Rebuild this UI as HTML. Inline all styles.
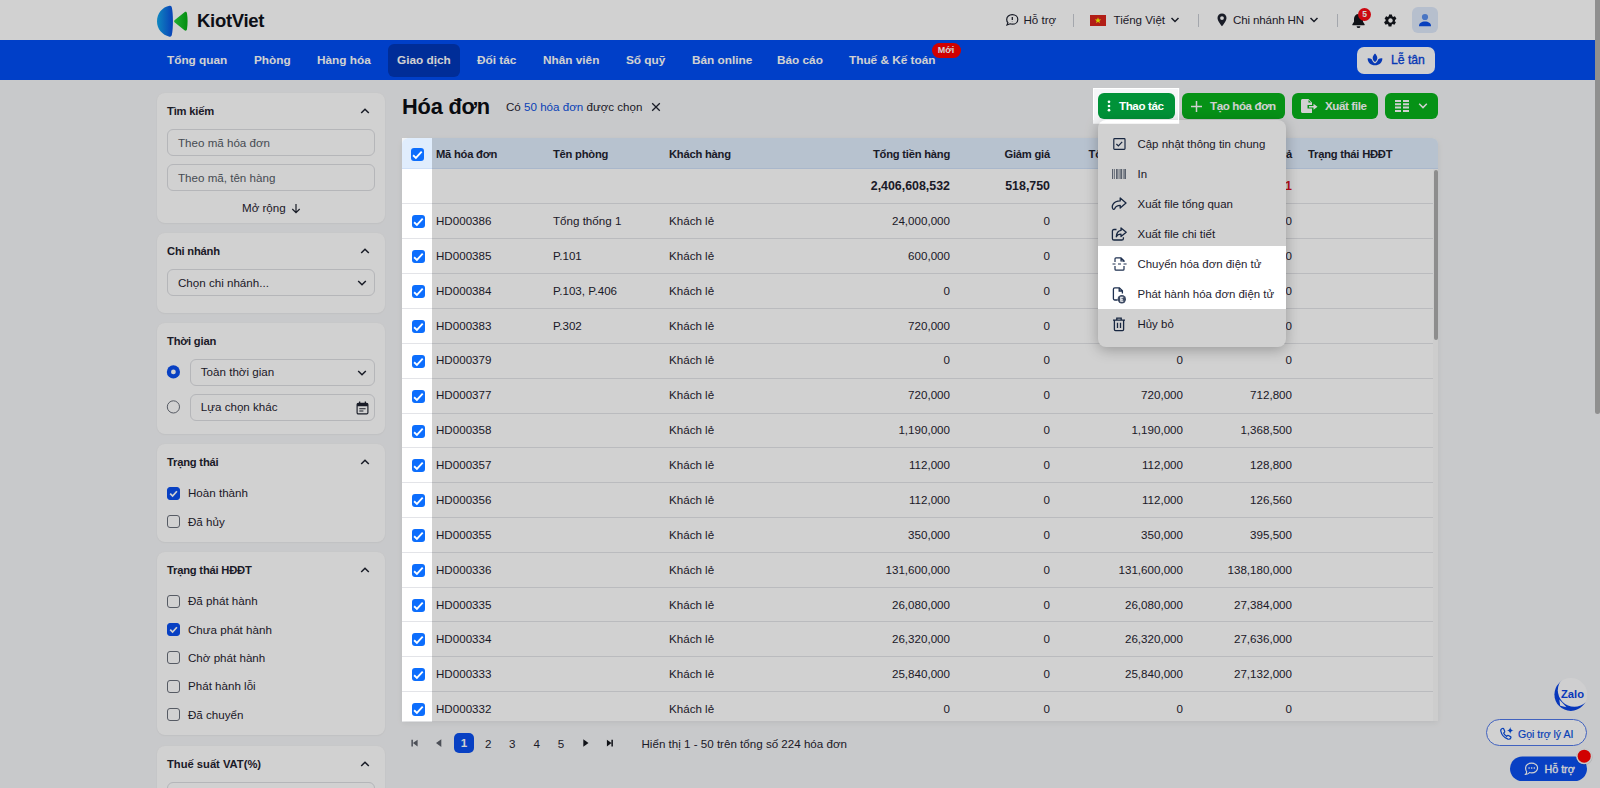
<!DOCTYPE html>
<html lang="vi">
<head>
<meta charset="utf-8">
<title>Hóa đơn - KiotViet</title>
<style>
*{box-sizing:border-box;margin:0;padding:0}
html,body{width:1600px;height:788px;overflow:hidden}
body{font-family:"Liberation Sans",sans-serif;font-size:11.6px;color:#1f2330;background:#f5f6f8;position:relative}
.abs{position:absolute}
svg{display:block}
/* header */
#hdr{position:absolute;left:0;top:0;width:1600px;height:40px;background:#fff}
#nav{position:absolute;left:0;top:40px;width:1600px;height:40px;background:#004ef5}
#nav .it{position:absolute;top:0;height:40px;line-height:40px;color:#fff;font-weight:bold;font-size:11.8px;white-space:nowrap}
#nav .act{position:absolute;left:387.5px;top:3.5px;width:72.5px;height:33px;border-radius:6px;background:#0037ba}
.hi{position:absolute;white-space:nowrap;font-size:11.6px;color:#1f2330;line-height:14px;top:13px}
.vd{position:absolute;top:14px;width:1px;height:13px;background:#c9ccd3}
/* sidebar */
.card{position:absolute;left:157px;width:228px;background:#fff;border-radius:8px;box-shadow:0 0 2px rgba(0,0,0,.04),0 1px 2px rgba(0,0,0,.04)}
.card .tt{position:absolute;left:10px;top:10px;font-weight:bold;font-size:11.2px;letter-spacing:-.2px;line-height:16px;white-space:nowrap}
.card .chev{position:absolute;left:203px;top:14px}
.inp{position:absolute;left:10px;width:208px;height:27px;border:1px solid #dddee2;border-radius:6px;background:#fff;line-height:26.4px;padding-left:10px;font-size:11.6px;color:#555b66;white-space:nowrap}
.inp.dk{color:#1f2330;line-height:24.4px}
.cb{position:absolute;left:10px;width:13px;height:13px;border:1px solid #6a6f7a;border-radius:3px;background:#fff}
.cb.on{background:#0a4fee;border-color:#0a4fee}
.cb svg,.tcb svg{position:absolute;left:0;top:0}
.cb.on svg{left:-1px;top:-1px}
.cbl{position:absolute;left:31px;font-size:11.6px;line-height:14px;white-space:nowrap}
/* main */
#ttl{position:absolute;left:402px;top:93px;font-size:21.8px;font-weight:bold;line-height:28px;color:#0c0e14;white-space:nowrap;letter-spacing:-.2px}
.btn{position:absolute;top:93px;height:26px;border-radius:6px;background:#08b21c;color:#fff;font-weight:bold;font-size:11.6px;letter-spacing:-.4px;line-height:26px;white-space:nowrap}
.btn span{position:absolute;top:0}
.btn svg{position:absolute}
/* table */
#tbl{position:absolute;left:402px;top:138px;width:1036px;height:583px;box-shadow:0 2px 6px rgba(0,0,0,.07);background:#fff;border-radius:6px 6px 0 0;overflow:hidden}
#th{position:absolute;left:0;top:0;width:1036px;height:31px;background:#e0edfd;border-bottom:1px solid #cfe0f8}
.r{position:absolute;left:0;width:1031px;border-bottom:1px solid #e3e4e8}
.c{position:absolute;top:0;height:34px;line-height:34px;white-space:nowrap;font-size:11.6px}
#th .c{top:.5px;height:31px;line-height:31px;font-weight:bold;font-size:11.2px;letter-spacing:-.22px}
.ra{text-align:right}
.r.up .c{top:-1px}
.b{font-weight:bold;font-size:12.4px}
.tcb{position:absolute;left:10px;top:11px;width:13px;height:13px;border-radius:3px;background:#0d6efd}
/* pagination */
.pg{position:absolute;top:736.5px;height:14px;line-height:14px;font-size:11.6px;color:#1f2330;white-space:nowrap}
/* menu */
#menu{position:absolute;left:1098px;top:120px;width:188px;height:226.5px;background:#fff;border-radius:8px;box-shadow:0 3px 14px rgba(0,0,0,.27)}
#menu .mi{position:absolute;left:0;width:188px;height:30px}
#menu .mi span{position:absolute;left:39.5px;top:.5px;line-height:30px;font-size:11.45px;white-space:nowrap;color:#1f2330}
#menu .mi svg{position:absolute;left:14px;top:8px}
#dim{position:absolute;left:0;top:0;z-index:50;pointer-events:none}
#sb{position:absolute;left:1595px;top:0;width:5px;height:414px;background:#8f8f8f;border-radius:0 0 3px 3px;z-index:60}
</style>
</head>
<body>
<div id="hdr">
  <svg class="abs" style="left:150px;top:0" width="44" height="40" viewBox="150 0 44 40">
    <defs>
      <linearGradient id="lgb" x1="0" y1="0" x2="1" y2="0"><stop offset="0" stop-color="#12a6ea"/><stop offset="1" stop-color="#0b4fe0"/></linearGradient>
      <linearGradient id="lgg" x1="0" y1="0" x2="1" y2="0"><stop offset="0" stop-color="#2ad440"/><stop offset="1" stop-color="#04ad12"/></linearGradient>
    </defs>
    <path fill="url(#lgb)" d="M169.600 5.800C171 5.500 171.600 6.300 171.900 7.800 173.200 13 173.400 29 171.900 34.600 171.600 36.200 171 37 169.500 36.700 162.300 35 157 29 157 21.500 157 13.500 162.300 7 169.600 5.800Z"/>
    <path fill="url(#lgg)" d="M174.800 20L184.500 12.200C185.800 11.300 186.800 12 187 13.500 187.800 18.500 187.800 24 187 29 186.800 30.500 185.800 31.200 184.500 30.300L174.800 22.600C173.900 21.900 173.900 20.700 174.800 20Z"/>
  </svg>
  <div class="abs" style="left:197px;top:10.300px;font-size:18.500px;line-height:22px;font-weight:bold;color:#10131c;letter-spacing:-.3px">KiotViet</div>

  <svg class="abs" style="left:1005px;top:13px" width="14" height="14" viewBox="0 0 14 14" fill="none" stroke="#1f2330" stroke-width="1.200"><path d="M7.300 1.600c3.100 0 5.500 2.100 5.500 4.800s-2.400 4.800-5.500 4.800c-.8 0-1.500-.1-2.200-.4L2 12l.9-2.400C2.100 8.800 1.700 7.700 1.700 6.400c0-2.700 2.500-4.800 5.600-4.800z"/><path d="M7.300 4v3.100M7.300 8.600v.2" stroke-width="1.300"/></svg>
  <div class="hi" style="left:1023.5px">Hỗ trợ</div>
  <div class="vd" style="left:1073px"></div>
  <svg class="abs" style="left:1090px;top:14.500px" width="16" height="11" viewBox="0 0 16 11"><rect width="16" height="11" fill="#da251d"/><path fill="#ff0" d="M8 2.200l.8 2.300h2.400L9.300 5.900l.7 2.300L8 6.800 6 8.200l.7-2.300L4.800 4.500h2.400z"/></svg>
  <div class="hi" style="left:1113.500px">Tiếng Việt</div>
  <svg class="abs" style="left:1170px;top:16px" width="10" height="8" viewBox="0 0 10 8" fill="none" stroke="#1f2330" stroke-width="1.500"><path d="M1.500 2l3.500 3.500L8.500 2"/></svg>
  <div class="vd" style="left:1198px"></div>
  <svg class="abs" style="left:1217px;top:13px" width="10" height="14" viewBox="0 0 10 14"><path fill="#1f2330" fill-rule="evenodd" d="M5 .5C2.400.5.500 2.500.500 5c0 3.200 4.500 8.300 4.500 8.300S9.500 8.200 9.500 5C9.500 2.500 7.600.5 5 .5zm0 2.700a1.900 1.900 0 110 3.800 1.900 1.900 0 010-3.800z"/></svg>
  <div class="hi" style="left:1233px;letter-spacing:-.15px">Chi nhánh HN</div>
  <svg class="abs" style="left:1308.500px;top:16px" width="10" height="8" viewBox="0 0 10 8" fill="none" stroke="#1f2330" stroke-width="1.500"><path d="M1.500 2l3.500 3.500L8.500 2"/></svg>
  <div class="vd" style="left:1337px"></div>
  <svg class="abs" style="left:1351px;top:13px" width="15" height="16" viewBox="0 0 15 16"><path fill="#14161d" d="M7.500 1C4.800 1 3 3.100 3 5.800v3L1.400 11.200c-.3.500 0 1.100.6 1.100h11c.6 0 .9-.6.600-1.100L12 8.800v-3C12 3.100 10.200 1 7.500 1zM5.600 13.200a1.900 1.900 0 003.800 0z"/></svg>
  <div class="abs" style="left:1358px;top:8px;width:13px;height:13px;border-radius:7px;background:#fa0a14;color:#fff;font-size:8.500px;font-weight:bold;line-height:13px;text-align:center">5</div>
  <svg class="abs" style="left:1382.500px;top:12.500px" width="15" height="15" viewBox="0 0 24 24"><path fill="#14161d" d="M19.140 12.940c.040-.3.060-.610.060-.940 0-.320-.020-.640-.070-.940l2.030-1.580a.490.490 0 00.120-.610l-1.920-3.320a.488.488 0 00-.590-.220l-2.390.960c-.5-.380-1.030-.7-1.620-.940l-.360-2.540a.484.484 0 00-.480-.410h-3.840c-.240 0-.430.170-.470.410l-.360 2.540c-.590.240-1.130.570-1.620.940l-2.390-.960c-.220-.080-.470 0-.590.220L2.740 8.870c-.120.210-.080.470.120.610l2.030 1.580c-.5.300-.9.630-.9.940s.2.640.070.940l-2.030 1.580a.490.490 0 00-.120.610l1.920 3.320c.120.220.370.290.590.220l2.390-.960c.5.380 1.030.7 1.620.940l.360 2.540c.5.240.240.410.480.410h3.840c.240 0 .440-.170.470-.410l.360-2.540c.590-.240 1.130-.560 1.620-.940l2.390.960c.220.080.470 0 .590-.220l1.920-3.320c.120-.220.070-.470-.120-.610l-2.010-1.580zM12 15.600c-1.980 0-3.600-1.620-3.600-3.600s1.620-3.600 3.600-3.600 3.600 1.620 3.600 3.600-1.620 3.600-3.600 3.600z"/></svg>
  <div class="abs" style="left:1412px;top:7px;width:26px;height:26px;border-radius:6px;background:#dfe9fb"></div>
  <svg class="abs" style="left:1418px;top:13px" width="14" height="14" viewBox="0 0 14 14"><circle cx="7" cy="4" r="3.100" fill="#5a8fee"/><path fill="#0a4fe8" d="M1 13.200c0-3 2.600-4.600 6-4.600s6 1.600 6 4.600z"/></svg>
</div>
<div id="nav">
  <div class="act"></div>
  <div class="it" style="left:167px">Tổng quan</div>
  <div class="it" style="left:254px">Phòng</div>
  <div class="it" style="left:317px">Hàng hóa</div>
  <div class="it" style="left:397px">Giao dịch</div>
  <div class="it" style="left:477px">Đối tác</div>
  <div class="it" style="left:543px">Nhân viên</div>
  <div class="it" style="left:626px">Sổ quỹ</div>
  <div class="it" style="left:692px">Bán online</div>
  <div class="it" style="left:777px">Báo cáo</div>
  <div class="it" style="left:849px">Thuế &amp; Kế toán</div>
  <div class="abs" style="left:931.500px;top:3.300px;width:29px;height:14.500px;border-radius:7.500px;background:#ff0000;color:#fff;font-size:9px;font-weight:bold;line-height:14px;text-align:center">Mới</div>
  <div class="abs" style="left:1357px;top:6.500px;width:78px;height:27px;border-radius:7px;background:#fdfdfe"></div>
  <svg class="abs" style="left:1367px;top:12.500px" width="16" height="13" viewBox="0 0 16 13"><path fill="#0a46dc" d="M8 .6C9.400 2 10.300 3.400 10.300 5c0 1.600-.9 3-2.300 4C6.600 8 5.700 6.600 5.700 5 5.700 3.400 6.600 2 8 .6zM.6 5.400c1.700-.2 3.200.2 4.300 1.100.3 1.300 1.100 2.500 2.400 3.500.2.200.5.300.7.300s.5-.1.700-.3c1.300-1 2.100-2.200 2.400-3.500 1.100-.9 2.600-1.300 4.300-1.100-.1 3.900-3.200 6.900-7.400 6.900S.7 9.300.6 5.400z"/></svg>
  <div class="abs" style="left:1391px;top:7px;line-height:26px;font-size:12.200px;color:#0a46dc;white-space:nowrap;-webkit-text-stroke:.35px #0a46dc">Lễ tân</div>
</div>
</div>
<div id="side">
  <!-- card 1 -->
  <div class="card" style="top:92.5px;height:130.5px">
    <div class="tt">Tìm kiếm</div>
    <svg class="chev" width="10" height="8" viewBox="0 0 10 8" fill="none" stroke="#1f2330" stroke-width="1.500"><path d="M1.200 6l3.800-3.800L8.800 6"/></svg>
    <div class="inp" style="top:36.500px">Theo mã hóa đơn</div>
    <div class="inp" style="top:71.500px">Theo mã, tên hàng</div>
    <div class="abs" style="left:85px;top:108px;line-height:14px;white-space:nowrap">Mở rộng</div>
    <svg class="abs" style="left:133.700px;top:110px" width="10" height="11" viewBox="0 0 10 11" fill="none" stroke="#1f2330" stroke-width="1.200"><path d="M5 1v8.500M1.300 6L5 9.700 8.700 6"/></svg>
  </div>
  <!-- card 2 -->
  <div class="card" style="top:233px;height:80px">
    <div class="tt">Chi nhánh</div>
    <svg class="chev" width="10" height="8" viewBox="0 0 10 8" fill="none" stroke="#1f2330" stroke-width="1.500"><path d="M1.200 6l3.800-3.800L8.800 6"/></svg>
    <div class="inp dk" style="top:36px;line-height:26.400px">Chọn chi nhánh...</div>
    <svg class="abs" style="left:200px;top:46px" width="10" height="8" viewBox="0 0 10 8" fill="none" stroke="#1f2330" stroke-width="1.500"><path d="M1.200 2l3.800 3.800L8.800 2"/></svg>
  </div>
  <!-- card 3 -->
  <div class="card" style="top:323px;height:111px">
    <div class="tt">Thời gian</div>
    <svg class="abs" style="left:8px;top:40px" width="18" height="54" viewBox="0 0 18 54"><circle cx="8.400" cy="8.900" r="6.600" fill="#0a4fee"/><circle cx="8.400" cy="8.900" r="2.400" fill="#fff"/><circle cx="8.400" cy="43.900" r="6.100" fill="#fff" stroke="#6a6f7a" stroke-width="1"/></svg>
    <div class="inp dk" style="left:32.800px;width:185.200px;top:36px">Toàn thời gian</div>
    <svg class="abs" style="left:200px;top:45.500px" width="10" height="8" viewBox="0 0 10 8" fill="none" stroke="#1f2330" stroke-width="1.500"><path d="M1.200 2l3.800 3.800L8.800 2"/></svg>
    <div class="inp dk" style="left:32.800px;width:185.200px;top:71px">Lựa chọn khác</div>
    <svg class="abs" style="left:198.600px;top:78px" width="13" height="14" viewBox="0 0 13 14"><path fill="none" stroke="#1f2330" stroke-width="1.150" d="M1.100 3.600C1.100 2.900 1.600 2.400 2.300 2.400H10.700C11.400 2.400 11.900 2.900 11.900 3.600V11.700C11.900 12.400 11.400 12.900 10.700 12.900H2.300C1.600 12.900 1.100 12.400 1.100 11.700Z"/><path fill="#1f2330" d="M1.100 2.800H11.900V5.200H1.100zM3 .6H4.300V2.800H3zM8.700 .6H10V2.800H8.700zM3.300 7.200H9.600V8.200H3.300zM3.300 9.500H7.400V10.500H3.300z"/></svg>
  </div>
  <!-- card 4 -->
  <div class="card" style="top:444px;height:98px">
    <div class="tt">Trạng thái</div>
    <svg class="chev" width="10" height="8" viewBox="0 0 10 8" fill="none" stroke="#1f2330" stroke-width="1.500"><path d="M1.200 6l3.800-3.800L8.800 6"/></svg>
    <div class="cb on" style="top:42.500px"><svg width="13" height="13" viewBox="0 0 13 13" fill="none" stroke="#fff" stroke-width="1.700"><path d="M3.200 6.700l2.400 2.400 4.300-4.800"/></svg></div>
    <div class="cbl" style="top:42px">Hoàn thành</div>
    <div class="cb" style="top:71px"></div>
    <div class="cbl" style="top:70.500px">Đã hủy</div>
  </div>
  <!-- card 5 -->
  <div class="card" style="top:552px;height:183px">
    <div class="tt">Trạng thái HĐĐT</div>
    <svg class="chev" width="10" height="8" viewBox="0 0 10 8" fill="none" stroke="#1f2330" stroke-width="1.500"><path d="M1.200 6l3.800-3.800L8.800 6"/></svg>
    <div class="cb" style="top:42.500px"></div>
    <div class="cbl" style="top:42px">Đã phát hành</div>
    <div class="cb on" style="top:71px"><svg width="13" height="13" viewBox="0 0 13 13" fill="none" stroke="#fff" stroke-width="1.700"><path d="M3.200 6.700l2.400 2.400 4.300-4.800"/></svg></div>
    <div class="cbl" style="top:70.500px">Chưa phát hành</div>
    <div class="cb" style="top:99.300px"></div>
    <div class="cbl" style="top:98.800px">Chờ phát hành</div>
    <div class="cb" style="top:127.600px"></div>
    <div class="cbl" style="top:127.100px">Phát hành lỗi</div>
    <div class="cb" style="top:156px"></div>
    <div class="cbl" style="top:155.500px">Đã chuyển</div>
  </div>
  <!-- card 6 -->
  <div class="card" style="top:745.500px;height:80px">
    <div class="tt" style="letter-spacing:0">Thuế suất VAT(%)</div>
    <svg class="chev" width="10" height="8" viewBox="0 0 10 8" fill="none" stroke="#1f2330" stroke-width="1.500"><path d="M1.200 6l3.800-3.800L8.800 6"/></svg>
    <div class="inp" style="top:36.500px"></div>
  </div>
</div>
<div id="main">
  <div id="ttl">Hóa đơn</div>
  <div class="abs" style="left:506px;top:100px;line-height:14px;white-space:nowrap">Có <span style="color:#0a4fe0">50 hóa đơn</span> được chọn</div>
  <svg class="abs" style="left:650.500px;top:102px" width="10" height="10" viewBox="0 0 10 10" fill="none" stroke="#1f2330" stroke-width="1.300"><path d="M1.200 1.200l7.600 7.600M8.800 1.200L1.200 8.800"/></svg>

  <div class="btn" style="left:1098px;width:77px;background:#009238">
    <svg style="left:9px;top:7px" width="4" height="12" viewBox="0 0 4 12" fill="#fff"><circle cx="2" cy="1.800" r="1.350"/><circle cx="2" cy="6" r="1.350"/><circle cx="2" cy="10.200" r="1.350"/></svg>
    <span style="left:21px">Thao tác</span>
  </div>
  <div class="btn" style="left:1182px;width:103px">
    <svg style="left:8.500px;top:7.500px" width="11" height="11" viewBox="0 0 11 11" fill="none" stroke="#fff" stroke-width="1.500"><path d="M5.500 0v11M0 5.500h11"/></svg>
    <span style="left:28px">Tạo hóa đơn</span>
  </div>
  <div class="btn" style="left:1292px;width:86px">
    <svg style="left:9px;top:6px" width="17" height="14" viewBox="0 0 17 14" fill="#fff"><path d="M1.500 0h6L11 3.500V6H6.500v3.500H11V14H1.500C.7 14 0 13.300 0 12.500v-11C0 .7.700 0 1.500 0zM7.500 1v2.500H10zM8 7h4.500V4.800L16.500 7.800 12.500 10.800V8.600H8z"/></svg>
    <span style="left:33px">Xuất file</span>
  </div>
  <div class="btn" style="left:1385px;width:53px">
    <svg style="left:10px;top:7px" width="14" height="12" viewBox="0 0 14 12" fill="#fff"><path d="M0 0h6v2H0zM8 0h6v2H8zM0 3.300h6v2H0zM8 3.300h6v2H8zM0 6.600h6v2H0zM8 6.600h6v2H8zM0 9.900h6v2H0zM8 9.900h6v2H8z"/></svg>
    <svg style="left:32.500px;top:8.500px" width="10" height="8" viewBox="0 0 10 8" fill="none" stroke="#fff" stroke-width="1.500"><path d="M1.200 1.800l3.800 3.800 3.800-3.800"/></svg>
  </div>
</div>
<div id="tbl">
<div id="th"><div class="tcb" style="left:9px;top:9.500px;width:12.500px"><svg width="13" height="13" viewBox="0 0 13 13" fill="none" stroke="#fff" stroke-width="1.850"><path d="M2.100 7.300L4.900 9.900 10.700 3.700"/></svg></div><div class="c" style="left:34px">Mã hóa đơn</div><div class="c" style="left:151px">Tên phòng</div><div class="c" style="left:267px">Khách hàng</div><div class="c ra " style="left:398px;width:150px">Tổng tiền hàng</div><div class="c ra " style="left:498px;width:150px">Giảm giá</div><div class="c ra " style="left:631px;width:150px">Tổng sau giảm giá</div><div class="c ra " style="left:740px;width:150px">Khách đã trả</div><div class="c" style="left:906px">Trạng thái HĐĐT</div></div>
<div class="r" style="top:31px;height:35px"><div class="c ra b" style="left:398px;width:150px">2,406,608,532</div><div class="c ra b" style="left:498px;width:150px">518,750</div><div class="c ra b" style="left:631px;width:150px">2,406,089,782</div><div class="c ra b" style="left:740px;width:150px"><span style="color:#e0121f">2,529,407,441</span></div></div>
<div class="r" style="top:66px;height:35px"><div class="tcb"><svg width="13" height="13" viewBox="0 0 13 13" fill="none" stroke="#fff" stroke-width="1.850"><path d="M2.100 7.300L4.900 9.900 10.700 3.700"/></svg></div><div class="c" style="left:34px">HD000386</div><div class="c" style="left:151px">Tổng thống 1</div><div class="c" style="left:267px">Khách lẻ</div><div class="c ra " style="left:398px;width:150px">24,000,000</div><div class="c ra " style="left:498px;width:150px">0</div><div class="c ra " style="left:631px;width:150px">24,000,000</div><div class="c ra " style="left:740px;width:150px">0</div></div>
<div class="r" style="top:101px;height:35px"><div class="tcb"><svg width="13" height="13" viewBox="0 0 13 13" fill="none" stroke="#fff" stroke-width="1.850"><path d="M2.100 7.300L4.900 9.900 10.700 3.700"/></svg></div><div class="c" style="left:34px">HD000385</div><div class="c" style="left:151px">P.101</div><div class="c" style="left:267px">Khách lẻ</div><div class="c ra " style="left:398px;width:150px">600,000</div><div class="c ra " style="left:498px;width:150px">0</div><div class="c ra " style="left:631px;width:150px">600,000</div><div class="c ra " style="left:740px;width:150px">0</div></div>
<div class="r" style="top:136px;height:35px"><div class="tcb"><svg width="13" height="13" viewBox="0 0 13 13" fill="none" stroke="#fff" stroke-width="1.850"><path d="M2.100 7.300L4.900 9.900 10.700 3.700"/></svg></div><div class="c" style="left:34px">HD000384</div><div class="c" style="left:151px">P.103, P.406</div><div class="c" style="left:267px">Khách lẻ</div><div class="c ra " style="left:398px;width:150px">0</div><div class="c ra " style="left:498px;width:150px">0</div><div class="c ra " style="left:631px;width:150px">0</div><div class="c ra " style="left:740px;width:150px">0</div></div>
<div class="r" style="top:171px;height:35px"><div class="tcb"><svg width="13" height="13" viewBox="0 0 13 13" fill="none" stroke="#fff" stroke-width="1.850"><path d="M2.100 7.300L4.900 9.900 10.700 3.700"/></svg></div><div class="c" style="left:34px">HD000383</div><div class="c" style="left:151px">P.302</div><div class="c" style="left:267px">Khách lẻ</div><div class="c ra " style="left:398px;width:150px">720,000</div><div class="c ra " style="left:498px;width:150px">0</div><div class="c ra " style="left:631px;width:150px">720,000</div><div class="c ra " style="left:740px;width:150px">0</div></div>
<div class="r up" style="top:206px;height:35px"><div class="tcb"><svg width="13" height="13" viewBox="0 0 13 13" fill="none" stroke="#fff" stroke-width="1.850"><path d="M2.100 7.300L4.900 9.900 10.700 3.700"/></svg></div><div class="c" style="left:34px">HD000379</div><div class="c" style="left:267px">Khách lẻ</div><div class="c ra " style="left:398px;width:150px">0</div><div class="c ra " style="left:498px;width:150px">0</div><div class="c ra " style="left:631px;width:150px">0</div><div class="c ra " style="left:740px;width:150px">0</div></div>
<div class="r up" style="top:241px;height:35px"><div class="tcb"><svg width="13" height="13" viewBox="0 0 13 13" fill="none" stroke="#fff" stroke-width="1.850"><path d="M2.100 7.300L4.900 9.900 10.700 3.700"/></svg></div><div class="c" style="left:34px">HD000377</div><div class="c" style="left:267px">Khách lẻ</div><div class="c ra " style="left:398px;width:150px">720,000</div><div class="c ra " style="left:498px;width:150px">0</div><div class="c ra " style="left:631px;width:150px">720,000</div><div class="c ra " style="left:740px;width:150px">712,800</div></div>
<div class="r up" style="top:276px;height:34px"><div class="tcb"><svg width="13" height="13" viewBox="0 0 13 13" fill="none" stroke="#fff" stroke-width="1.850"><path d="M2.100 7.300L4.900 9.900 10.700 3.700"/></svg></div><div class="c" style="left:34px">HD000358</div><div class="c" style="left:267px">Khách lẻ</div><div class="c ra " style="left:398px;width:150px">1,190,000</div><div class="c ra " style="left:498px;width:150px">0</div><div class="c ra " style="left:631px;width:150px">1,190,000</div><div class="c ra " style="left:740px;width:150px">1,368,500</div></div>
<div class="r" style="top:310px;height:35px"><div class="tcb"><svg width="13" height="13" viewBox="0 0 13 13" fill="none" stroke="#fff" stroke-width="1.850"><path d="M2.100 7.300L4.900 9.900 10.700 3.700"/></svg></div><div class="c" style="left:34px">HD000357</div><div class="c" style="left:267px">Khách lẻ</div><div class="c ra " style="left:398px;width:150px">112,000</div><div class="c ra " style="left:498px;width:150px">0</div><div class="c ra " style="left:631px;width:150px">112,000</div><div class="c ra " style="left:740px;width:150px">128,800</div></div>
<div class="r" style="top:345px;height:35px"><div class="tcb"><svg width="13" height="13" viewBox="0 0 13 13" fill="none" stroke="#fff" stroke-width="1.850"><path d="M2.100 7.300L4.900 9.900 10.700 3.700"/></svg></div><div class="c" style="left:34px">HD000356</div><div class="c" style="left:267px">Khách lẻ</div><div class="c ra " style="left:398px;width:150px">112,000</div><div class="c ra " style="left:498px;width:150px">0</div><div class="c ra " style="left:631px;width:150px">112,000</div><div class="c ra " style="left:740px;width:150px">126,560</div></div>
<div class="r" style="top:380px;height:35px"><div class="tcb"><svg width="13" height="13" viewBox="0 0 13 13" fill="none" stroke="#fff" stroke-width="1.850"><path d="M2.100 7.300L4.900 9.900 10.700 3.700"/></svg></div><div class="c" style="left:34px">HD000355</div><div class="c" style="left:267px">Khách lẻ</div><div class="c ra " style="left:398px;width:150px">350,000</div><div class="c ra " style="left:498px;width:150px">0</div><div class="c ra " style="left:631px;width:150px">350,000</div><div class="c ra " style="left:740px;width:150px">395,500</div></div>
<div class="r" style="top:415px;height:35px"><div class="tcb"><svg width="13" height="13" viewBox="0 0 13 13" fill="none" stroke="#fff" stroke-width="1.850"><path d="M2.100 7.300L4.900 9.900 10.700 3.700"/></svg></div><div class="c" style="left:34px">HD000336</div><div class="c" style="left:267px">Khách lẻ</div><div class="c ra " style="left:398px;width:150px">131,600,000</div><div class="c ra " style="left:498px;width:150px">0</div><div class="c ra " style="left:631px;width:150px">131,600,000</div><div class="c ra " style="left:740px;width:150px">138,180,000</div></div>
<div class="r" style="top:450px;height:34px"><div class="tcb"><svg width="13" height="13" viewBox="0 0 13 13" fill="none" stroke="#fff" stroke-width="1.850"><path d="M2.100 7.300L4.900 9.900 10.700 3.700"/></svg></div><div class="c" style="left:34px">HD000335</div><div class="c" style="left:267px">Khách lẻ</div><div class="c ra " style="left:398px;width:150px">26,080,000</div><div class="c ra " style="left:498px;width:150px">0</div><div class="c ra " style="left:631px;width:150px">26,080,000</div><div class="c ra " style="left:740px;width:150px">27,384,000</div></div>
<div class="r" style="top:484px;height:35px"><div class="tcb"><svg width="13" height="13" viewBox="0 0 13 13" fill="none" stroke="#fff" stroke-width="1.850"><path d="M2.100 7.300L4.900 9.900 10.700 3.700"/></svg></div><div class="c" style="left:34px">HD000334</div><div class="c" style="left:267px">Khách lẻ</div><div class="c ra " style="left:398px;width:150px">26,320,000</div><div class="c ra " style="left:498px;width:150px">0</div><div class="c ra " style="left:631px;width:150px">26,320,000</div><div class="c ra " style="left:740px;width:150px">27,636,000</div></div>
<div class="r" style="top:519px;height:35px"><div class="tcb"><svg width="13" height="13" viewBox="0 0 13 13" fill="none" stroke="#fff" stroke-width="1.850"><path d="M2.100 7.300L4.900 9.900 10.700 3.700"/></svg></div><div class="c" style="left:34px">HD000333</div><div class="c" style="left:267px">Khách lẻ</div><div class="c ra " style="left:398px;width:150px">25,840,000</div><div class="c ra " style="left:498px;width:150px">0</div><div class="c ra " style="left:631px;width:150px">25,840,000</div><div class="c ra " style="left:740px;width:150px">27,132,000</div></div>
<div class="r" style="top:554px;height:35px"><div class="tcb"><svg width="13" height="13" viewBox="0 0 13 13" fill="none" stroke="#fff" stroke-width="1.850"><path d="M2.100 7.300L4.900 9.900 10.700 3.700"/></svg></div><div class="c" style="left:34px">HD000332</div><div class="c" style="left:267px">Khách lẻ</div><div class="c ra " style="left:398px;width:150px">0</div><div class="c ra " style="left:498px;width:150px">0</div><div class="c ra " style="left:631px;width:150px">0</div><div class="c ra " style="left:740px;width:150px">0</div></div>
<div class="abs" style="left:1031px;top:31px;width:5px;height:552px;background:#fafafa"></div>
<div class="abs" style="left:1032px;top:32px;width:4px;height:170px;border-radius:2px;background:#adadad"></div>
</div>
<div id="pag">
  <svg class="abs" style="left:410px;top:738px" width="10" height="10" viewBox="410 738 10 10" fill="#5d616b"><path d="M411.400 739.700h1.500v6.800h-1.500zM417.600 739.700v6.800L412.900 743.100z"/></svg>
  <svg class="abs" style="left:434px;top:738px" width="10" height="10" viewBox="434 738 10 10" fill="#5d616b"><path d="M441.300 739.300v7.600L436 743.100z"/></svg>
  <div class="abs" style="left:454px;top:733px;width:20px;height:20px;border-radius:5px;background:#0a4fee;color:#fff;font-weight:bold;font-size:11.600px;line-height:20px;text-align:center">1</div>
  <div class="pg" style="left:485px">2</div>
  <div class="pg" style="left:509px">3</div>
  <div class="pg" style="left:533.600px">4</div>
  <div class="pg" style="left:557.800px">5</div>
  <svg class="abs" style="left:581px;top:738px" width="10" height="10" viewBox="581 738 10 10" fill="#14161d"><path d="M583.300 739.300v7.400L588.500 743z"/></svg>
  <svg class="abs" style="left:605px;top:738px" width="10" height="10" viewBox="605 738 10 10" fill="#14161d"><path d="M611.400 739.800h1.500v6.700h-1.500zM606.900 739.800v6.700L611.500 743.100z"/></svg>
  <div class="pg" style="left:641.500px">Hiển thị 1 - 50 trên tổng số 224 hóa đơn</div>
</div>
<div id="menu">
  <div class="mi" style="top:8px"><svg style="left:14.500px;top:9.500px" width="13" height="12" viewBox="0 0 13 12" fill="none" stroke="#1e3050" stroke-width="1.200"><rect x=".8" y=".6" width="11.200" height="10.800" rx=".8"/><path d="M3.400 6l2 2 3.800-4.200"/></svg><span>Cập nhật thông tin chung</span></div>
  <div class="mi" style="top:38px"><svg style="left:14px;top:10.500px" width="14" height="10" viewBox="0 0 14 10" fill="#6f7887"><path d="M0 0h1.200v10H0zM2.200 0h.8v10h-.8zM4 0h1.700v10H4zM6.600 0h.9v10h-.9zM8.300 0h1.700v10H8.300zM10.800 0h.8v10h-.8zM12.300 0H14v10h-1.700z"/></svg><span>In</span></div>
  <div class="mi" style="top:68px"><svg style="left:13px;top:9px" width="16" height="14" viewBox="0 0 16 14" fill="none" stroke="#1e3050" stroke-width="1.300" stroke-linejoin="round"><path d="M9.200 1L15 6 9.200 11V8.300C6.400 8.300 4.700 9.200 3.800 11.600 3.500 12.400 2.400 12.600 1.900 11.900.4 9.600 1.600 4.200 9.200 3.900Z"/></svg><span>Xuất file tổng quan</span></div>
  <div class="mi" style="top:98px"><svg style="left:13px;top:8.500px" width="16" height="14" viewBox="0 0 16 14" fill="none" stroke="#1e3050" stroke-width="1.300" stroke-linejoin="round"><path d="M10 .9L15.200 5.200 10 9.500V7.200C7.600 7.200 6.200 7.900 5.300 9.800 5.500 6.600 6.800 3.800 10 3.400Z"/><path d="M5.500 2.500H3C2 2.500 1.400 3.100 1.400 4.100V11.400C1.400 12.400 2 13 3 13H10.800C11.800 13 12.400 12.400 12.400 11.400V10.200"/></svg><span>Xuất file chi tiết</span></div>
  <div class="mi" style="top:128px"><svg style="left:13.500px;top:9px" width="16" height="14" viewBox="0 0 16 14" fill="none" stroke="#1e3050" stroke-width="1.200"><path d="M3 5V1.800C3 1.200 3.400.8 4 .8H9L12 3.800V5M3 9V12.200C3 12.800 3.400 13.200 4 13.200H11C11.600 13.200 12 12.800 12 12.200V9M9 1V4H12M.500 7H3.500M6 7H9M11.500 7H14.600"/></svg><span>Chuyển hóa đơn điện tử</span></div>
  <div class="mi" style="top:158px"><svg style="left:14px;top:8.500px" width="16" height="18" viewBox="0 0 16 18"><path fill="none" stroke="#1e3050" stroke-width="1.300" d="M5.600 13H2.800C2 13 1.400 12.400 1.400 11.600V2.200C1.400 1.400 2 .8 2.800.8H7.400L10.400 3.800V6.600M7.200 1V4H10.200"/><circle cx="9.800" cy="12.200" r="4.200" fill="#3d4a63"/><path fill="none" stroke="#fff" stroke-width="1.100" d="M11.300 10.300H8.800V14.100H11.300M8.800 12.200H10.900"/></svg><span>Phát hành hóa đơn điện tử</span></div>
  <div class="mi" style="top:188px"><svg style="left:14px;top:8.500px" width="14" height="15" viewBox="0 0 14 15" fill="none" stroke="#1e3050" stroke-width="1.300"><path d="M1 3.200H13M4.800 3.200V1.200H9.200V3.200M2.400 3.200V12.600C2.400 13.300 2.800 13.700 3.500 13.700H10.500C11.200 13.700 11.600 13.300 11.600 12.600V3.200M5.500 5.800V11M8.500 5.800V11"/></svg><span>Hủy bỏ</span></div>
</div>
<div id="float">
  <svg class="abs" style="left:1550px;top:674px" width="42" height="42" viewBox="1550 674 42 42">
    <defs><mask id="zm"><rect x="1550" y="674" width="42" height="42" fill="#fff"/><circle cx="1574.300" cy="690.300" r="16.500" fill="#000"/><path fill="#000" d="M1560.200 705.700L1559.300 699.500 1566.500 707.300Z"/></mask></defs>
    <circle cx="1570.800" cy="694.500" r="16.400" fill="#fdfdfe"/>
    <circle cx="1570.800" cy="694.500" r="16.400" fill="#0a44e4" mask="url(#zm)"/>
  </svg>
  <div class="abs" style="left:1561px;top:686.500px;font-size:11.200px;font-weight:bold;color:#0a44e4;line-height:14px">Zalo</div>
  <div class="abs" style="left:1486px;top:719.300px;width:101.400px;height:26.700px;border-radius:13.500px;background:#fff;border:1px solid #5078ea"></div>
  <svg class="abs" style="left:1499px;top:726.500px" width="15" height="14" viewBox="0 0 15 14" fill="none" stroke="#0a4fe0" stroke-width="1.200"><path d="M3.300 1.500c-.9.300-1.800 1.200-1.500 2.600.8 3.600 3.400 6.600 7.200 8 1.400.4 2.500-.400 2.900-1.400.2-.5 0-.9-.4-1.100L9.400 8.500c-.4-.2-.8-.1-1.100.2l-.6.700C6.300 8.700 5.200 7.500 4.600 6l.8-.6c.3-.3.400-.7.300-1.100L4.800 2c-.2-.5-.8-.7-1.500-.5z"/><path fill="#0a4fe0" stroke="none" d="M11.200 0Q11.600 3.100 14.700 3.500 11.600 3.900 11.200 7 10.800 3.900 7.700 3.500 10.800 3.100 11.200 0Z"/></svg>
  <div class="abs" style="left:1518px;top:726.600px;font-size:10.500px;color:#0a4fe0;line-height:14px;white-space:nowrap;-webkit-text-stroke:.2px #0a4fe0">Gọi trợ lý AI</div>
  <svg class="abs" style="left:1505px;top:745px" width="95" height="43" viewBox="1505 745 95 43"><rect x="1510" y="756.500" width="77" height="24.600" rx="12.300" fill="#0a4fee"/></svg>
  <svg class="abs" style="left:1523px;top:761.500px" width="16" height="14" viewBox="0 0 16 14" fill="none" stroke="#fff" stroke-width="1.200"><path d="M8.600 1.200c3.400 0 6 2.100 6 4.800s-2.600 4.800-6 4.800c-.7 0-1.400-.1-2-.3-.8 1-2.200 1.800-4 1.900.6-.7 1-1.500 1.100-2.600C2.900 8.900 2.600 7.500 2.600 6c0-2.700 2.600-4.800 6-4.800z"/><path d="M6 6.100h.2M8.600 6.100h.2M11.200 6.100h.2" stroke-width="1.500" stroke-linecap="round"/></svg>
  <div class="abs" style="left:1544.500px;top:761.500px;font-size:10.700px;color:#fff;line-height:14px;white-space:nowrap;-webkit-text-stroke:.35px #fff">Hỗ trợ</div>
  <svg class="abs" style="left:1570px;top:742px;overflow:visible" width="30" height="30" viewBox="1570 742 30 30"><circle cx="1584.300" cy="756.900" r="8.300" fill="#000" opacity=".12"/><circle cx="1584.200" cy="756.200" r="8.100" fill="#f1f5f7"/><circle cx="1584.200" cy="756.200" r="6.550" fill="#ff0000"/></svg>
</div>
<svg id="dim" width="1600" height="788" viewBox="0 0 1600 788"><path fill="#000" fill-opacity=".18" fill-rule="evenodd" d="M0 0H1600V788H0Z M1093 88H1179.200V123.800H1093Z M1098 246H1286V309H1098Z M402 138H432V721.800H402Z"/></svg>
<div class="abs" style="left:1093px;top:88px;width:86.200px;height:32px;border:1.600px solid #fff;border-bottom:0;z-index:55"></div>
<div id="sb"></div>
</body>
</html>
